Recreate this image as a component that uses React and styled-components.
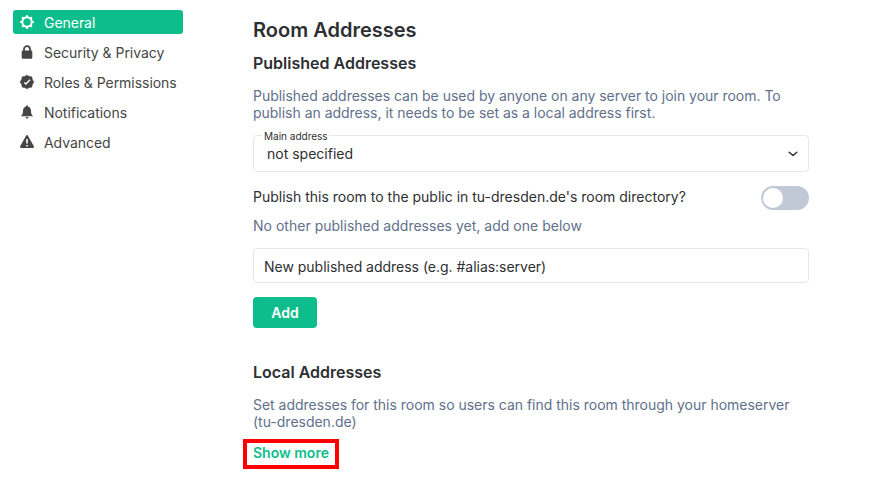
import React from "react";
import styled, { createGlobalStyle } from "styled-components";

const Global = createGlobalStyle`
  * { box-sizing: border-box; }
  body { margin: 0; background: #fff; font-family: Inter, sans-serif; font-size: 14px; line-height: 17px; color: #2e2f32; }
  h2, h3, p { margin: 0; }
`;
const Page = styled.div`display: flex; width: 880px; height: 490px; overflow: hidden; padding-left: 13px;`;
const Sidebar = styled.nav`display: flex; flex-direction: column; gap: 6px; width: 170px; padding-top: 10px; margin-right: 70px;`;
const Tab = styled.div`
  display: flex; align-items: center; gap: 9px; height: 24px; padding-left: 6px; border-radius: 3px;
  background: ${(p) => (p.$active ? "#0dbd8b" : "transparent")};
  color: ${(p) => (p.$active ? "#fff" : "#454545")};
  white-space: nowrap;
  letter-spacing: -0.04px;
  span { padding-top: 1px; }
  svg { width: 16px; height: 16px; flex: none; }
`;
const Content = styled.main`width: 556px; padding-top: 18px;`;
const Title = styled.h2`font-size: 20px; line-height: 24px; font-weight: 600;`;
const Heading = styled.h3`font-size: 16px; line-height: 20px; font-weight: 600; margin-top: ${(p) => p.$top}px;`;
const Note = styled.p`color: #61708b; margin-top: ${(p) => p.$top}px; letter-spacing: ${(p) => p.$track || 0}px;`;
const Fieldset = styled.fieldset`
  margin: 7px 0 0; padding: 0 10px 0 8px; height: 44px; border: 1px solid #e7e7e7; border-radius: 4px; min-width: 0;
`;
const Legend = styled.legend`font-size: 10px; line-height: 12px; padding: 2px 1px 0 2px;`;
const SelectValue = styled.div`
  display: flex; justify-content: space-between; align-items: center; height: 22px; padding-left: 5px;
  svg { margin-top: 2px; }
`;
const ToggleRow = styled.div`display: flex; justify-content: space-between; height: 24px; margin-top: 14px; line-height: 22px;`;
const Toggle = styled.div`
  width: 48px; height: 24px; border-radius: 12px; background: #c1c9d6; padding: 2px;
  &::before { content: ""; display: block; width: 20px; height: 20px; border-radius: 50%; background: #fff; }
`;
const Input = styled.div`height: 35px; border: 1px solid #e7e7e7; border-radius: 4px; margin-top: 14px; padding: 9px 10px; letter-spacing: -0.02px;`;
const AddButton = styled.button`
  display: block; width: 64px; height: 31px; margin: 14px 0 0; padding: 0; border: 0; border-radius: 4px;
  background: #0dbd8b; color: #fff; font: 600 14px/17px Inter, sans-serif;
`;
const ShowMore = styled.div`
  width: 96px; height: 30px; margin: 9px 0 0 -10px; border: 4px solid #f00; padding: 1px 0 0 6px;
  color: #0dbd8b; font-weight: 600; white-space: nowrap;
`;

const tabs = [
  ["General", <svg viewBox="0 0 16 16"><circle cx="8" cy="8" r="4.700" fill="none" stroke="currentColor" strokeWidth="2" /><path d="M8 1.200v2.600M8 12.200v2.600M1.200 8h2.600M12.200 8h2.600M3.200 3.200l1.800 1.800M11 11l1.800 1.800M3.200 12.800l1.800-1.800M11 5l1.800-1.800" stroke="currentColor" strokeWidth="2.200" /></svg>],
  ["Security & Privacy", <svg viewBox="0 0 16 16"><rect x="2.700" y="6.500" width="10.600" height="8.300" rx="1.300" fill="currentColor" /><path d="M5 8V5.200a3 3 0 0 1 6 0V8" fill="none" stroke="currentColor" strokeWidth="1.800" /></svg>],
  ["Roles & Permissions", <svg viewBox="0 0 16 16"><path d="M8 1l1.900 1.200 2.900.6.700 3L15 8l-1.500 2.200-.7 3-2.900.6L8 15l-1.900-1.200-2.900-.6-.7-3L1 8l1.500-2.200.7-3 2.900-.6z" fill="currentColor" stroke="currentColor" strokeWidth=".4" strokeLinejoin="round" /><path d="M5.200 8.500l1.700 1.600L11 5.700" fill="none" stroke="#fff" strokeWidth="1.400" /></svg>],
  ["Notifications", <svg viewBox="0 0 16 16"><path d="M8 1.500c.8 0 1.200.5 1.200 1.200C11.200 3.300 12 4.800 12 6.800c0 3 .7 3.800 2 5.500H2c1.300-1.700 2-2.500 2-5.500 0-2 .8-3.500 2.800-4.100 0-.7.4-1.200 1.200-1.200zM6.500 13.100h3a1.500 1.500 0 0 1-3 0" fill="currentColor" /></svg>],
  ["Advanced", <svg viewBox="0 0 16 16"><path d="M8 2.200l5.900 10.600H2.100z" fill="currentColor" stroke="currentColor" strokeWidth="2.200" strokeLinejoin="round" /><path d="M8 5v4.500M8 10.900v1.600" stroke="#fff" strokeWidth="1.600" /></svg>],
];

export default function App() {
  return (
    <Page>
      <Global />
      <Sidebar>
        {tabs.map(([label, icon], i) => (
          <Tab key={label} $active={i === 0}>{icon}<span>{label}</span></Tab>
        ))}
      </Sidebar>
      <Content>
        <Title>Room Addresses</Title>
        <Heading $top={11}>Published Addresses</Heading>
        <Note $top={14} $track={-0.022}>Published addresses can be used by anyone on any server to join your room. To publish an address, it needs to be set as a local address first.</Note>
        <Fieldset>
          <Legend>Main address</Legend>
          <SelectValue>
            not specified
            <svg width="10" height="6" viewBox="0 0 10 6"><path d="M1.200 1.200l3.800 3.300 3.800-3.300" fill="none" stroke="#2e2f32" strokeWidth="1.500" strokeLinecap="round" strokeLinejoin="round" /></svg>
          </SelectValue>
        </Fieldset>
        <ToggleRow>Publish this room to the public in tu-dresden.de's room directory?<Toggle /></ToggleRow>
        <Note $top={7} $track={0.015}>No other published addresses yet, add one below</Note>
        <Input>New published address (e.g. #alias:server)</Input>
        <AddButton>Add</AddButton>
        <Heading $top={34}>Local Addresses</Heading>
        <Note $top={14} $track={-0.013}>Set addresses for this room so users can find this room through your homeserver (tu-dresden.de)</Note>
        <ShowMore>Show more</ShowMore>
      </Content>
    </Page>
  );
}
